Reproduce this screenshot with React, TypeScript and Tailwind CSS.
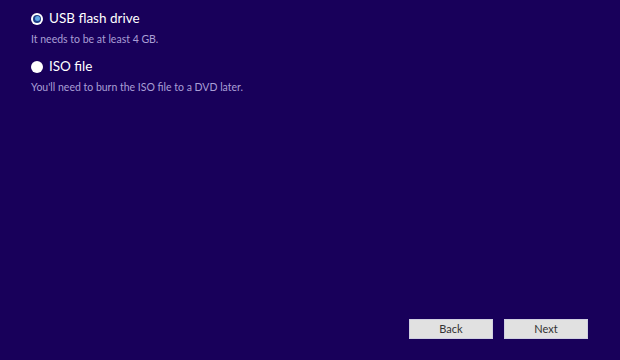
export default function App() {
  return (
    <div className="w-[620px] h-[360px] bg-[#18005a] relative flex flex-col font-['Lato','Noto_Sans',sans-serif] text-white overflow-hidden">
      <div className="flex flex-col pl-[31px] pt-[9px]">
        <div className="flex items-center gap-[6px] h-[19px]">
          <span className="w-[12px] h-[12px] rounded-full bg-white flex items-center justify-center">
            <span className="w-[8px] h-[8px] rounded-full bg-[#1c3c86] flex items-center justify-center">
              <span className="w-[5px] h-[5px] rounded-full bg-[#5fa8e6]" />
            </span>
          </span>
          <span className="text-[13.5px] leading-none">USB flash drive</span>
        </div>
        <div className="text-[10.5px] text-[#a99fd6] mt-[6px] leading-none">It needs to be at least 4 GB.</div>
        <div className="flex items-center gap-[6px] h-[19px] mt-[13px]">
          <span className="w-[12px] h-[12px] rounded-full bg-white" />
          <span className="text-[13.5px] leading-none">ISO file</span>
        </div>
        <div className="text-[10.5px] text-[#a99fd6] mt-[5px] leading-none">You'll need to burn the ISO file to a DVD later.</div>
      </div>
      <div className="mt-auto flex justify-end gap-[11px] pr-[32px] pb-[21px]">
        <button className="w-[84px] h-[20px] bg-[#e1e1e1] border border-[#cfcfe0] text-[11px] text-[#333]">Back</button>
        <button className="w-[84px] h-[20px] bg-[#e1e1e1] border border-[#cfcfe0] text-[11px] text-[#333]">Next</button>
      </div>
    </div>
  );
}
